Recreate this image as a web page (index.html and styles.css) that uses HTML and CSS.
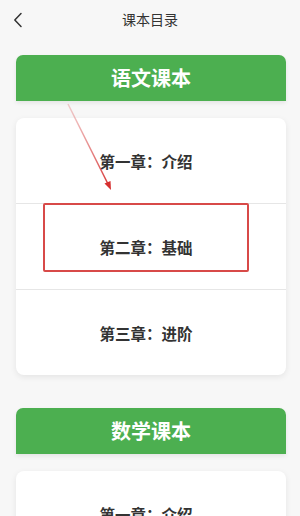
FILE: index.html
```html
<!DOCTYPE html>
<html lang="zh-CN">
<head>
    <meta charset="UTF-8">
    <meta name="viewport" content="width=device-width, initial-scale=1.0">
    <title>课本目录</title>
    <link rel="stylesheet" href="styles.css">
</head>
<body>
    <header class="nav">
        <span class="back">
            <svg width="10" height="16" viewBox="0 0 10 16"><path d="M8 1.5 L1.8 8 L8 14.5" fill="none" stroke="#333" stroke-width="1.5" stroke-linecap="round" stroke-linejoin="round"/></svg>
        </span>
        <h1>课本目录</h1>
    </header>

    <main class="list">
        <section class="book">
            <h2 class="book-title">语文课本</h2>
            <div class="chapters">
                <div class="chapter">第一章：介绍</div>
                <div class="chapter">
                    第二章：基础
                    <span class="mark"></span>
                </div>
                <div class="chapter">第三章：进阶</div>
            </div>
        </section>

        <section class="book">
            <h2 class="book-title">数学课本</h2>
            <div class="chapters">
                <div class="chapter">第一章：介绍</div>
                <div class="chapter">第二章：基础</div>
                <div class="chapter">第三章：进阶</div>
            </div>
        </section>
    </main>

    <!-- annotation arrow -->
    <svg class="arrow" width="300" height="220" viewBox="0 0 300 220">
        <defs>
            <linearGradient id="fade" x1="68" y1="104" x2="110" y2="189" gradientUnits="userSpaceOnUse">
                <stop offset="0" stop-color="#e8a0a0" stop-opacity="0.5"/>
                <stop offset="1" stop-color="#d62f2f"/>
            </linearGradient>
        </defs>
        <line x1="68" y1="104" x2="108" y2="184" stroke="url(#fade)" stroke-width="1.6"/>
        <path d="M111 190 L104.5 183.5 L110.5 181 Z" fill="#d62f2f"/>
    </svg>
</body>
</html>
```

FILE: styles.css
```css
body {
    font-family: "Noto Sans CJK SC", "Noto Sans", sans-serif;
    background-color: #f7f7f7;
    margin: 0;
    padding: 0;
    color: #333;
    overflow: hidden;
}

.nav {
    position: relative;
    height: 38px;
    display: flex;
    align-items: center;
    justify-content: center;
}

.nav h1 {
    margin: 0;
    font-size: 14px;
    font-weight: normal;
    color: #333;
}

.back {
    position: absolute;
    left: 13px;
    top: 12px;
    display: flex;
}

.list {
    padding: 17px 14px 0 16px;
}

.book {
    margin-bottom: 33px;
}

.book-title {
    margin: 0;
    height: 46px;
    line-height: 46px;
    text-align: center;
    background-color: #4caf50;
    color: #fff;
    font-size: 20px;
    font-weight: bold;
    border-radius: 7px 7px 0 0;
    box-shadow: 0 2px 4px rgba(0, 0, 0, 0.08);
}

.chapters {
    margin-top: 17px;
    background-color: #fff;
    border-radius: 8px;
    box-shadow: 0 2px 6px rgba(0, 0, 0, 0.08);
}

.chapter {
    position: relative;
    height: 85px;
    padding-right: 10px;
    display: flex;
    align-items: center;
    justify-content: center;
    font-size: 15.5px;
    font-weight: bold;
    color: #333;
    border-bottom: 1px solid #e6e6e6;
}

.chapter:last-child {
    border-bottom: none;
}

.mark {
    position: absolute;
    left: 27px;
    top: -1px;
    width: 202px;
    height: 65px;
    border: 2px solid #d84a48;
    border-radius: 2px;
}

.arrow {
    position: absolute;
    left: 0;
    top: 0;
}
```
